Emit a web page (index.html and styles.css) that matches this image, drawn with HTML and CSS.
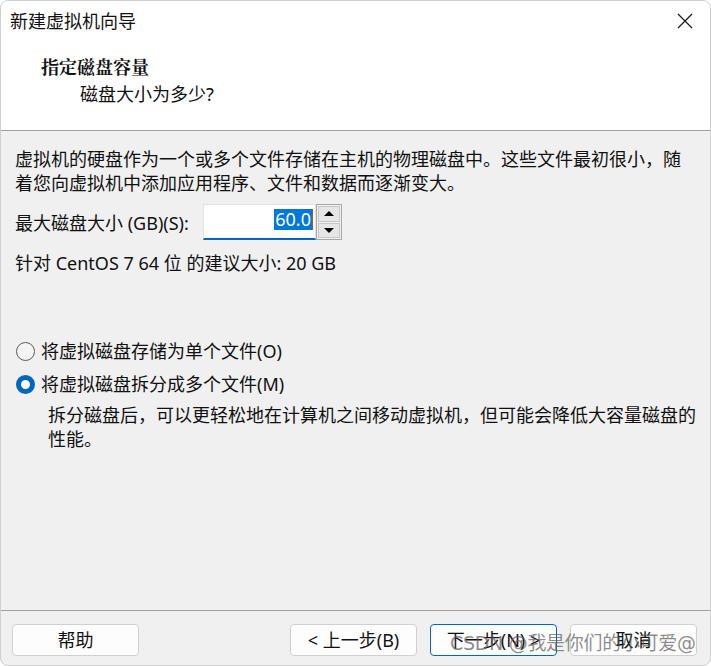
FILE: index.html
```html
<!DOCTYPE html>
<html lang="zh-CN">
<head>
<meta charset="utf-8">
<title>新建虚拟机向导</title>
<link rel="stylesheet" href="styles.css">
</head>
<body>
<div class="window">
  <div class="titlebar">
    <span class="title">新建虚拟机向导</span>
    <svg class="close" width="16" height="16" viewBox="0 0 16 16"><path d="M1 1L15 15M15 1L1 15" stroke="#1a1a1a" stroke-width="1.3" fill="none"/></svg>
  </div>
  <div class="header">
    <div class="h-title">指定磁盘容量</div>
    <div class="h-sub">磁盘大小为多少?</div>
  </div>
  <div class="content">
    <p class="intro">虚拟机的硬盘作为一个或多个文件存储在主机的物理磁盘中。这些文件最初很小，随<br>着您向虚拟机中添加应用程序、文件和数据而逐渐变大。</p>
    <div class="size-row">
      <span class="label">最大磁盘大小 (GB)(S):</span>
      <div class="field"><span class="sel">60.0</span><span class="caret"></span></div>
      <div class="spin">
        <div class="spin-btn"><span class="tri up"></span></div>
        <div class="spin-btn"><span class="tri down"></span></div>
      </div>
    </div>
    <p class="recommend">针对 CentOS 7 64 位 的建议大小: 20 GB</p>
    <div class="radio-row"><span class="radio"></span><span>将虚拟磁盘存储为单个文件(O)</span></div>
    <div class="radio-row second"><span class="radio checked"></span><span>将虚拟磁盘拆分成多个文件(M)</span></div>
    <p class="desc">拆分磁盘后，可以更轻松地在计算机之间移动虚拟机，但可能会降低大容量磁盘的<br>性能。</p>
  </div>
  <div class="footer">
    <button class="btn">帮助</button>
    <div class="spacer"></div>
    <button class="btn">&lt; 上一步(B)</button>
    <button class="btn default">下一步(N) &gt;</button>
    <button class="btn">取消</button>
  </div>
  <div class="watermark">CSDN @我是你们的小可爱@</div>
</div>
</body>
</html>
```
FILE: styles.css
```css
* { box-sizing: border-box; }
html, body { margin: 0; padding: 0; background: #ffffff; }
body {
  width: 711px;
  height: 666px;
  overflow: hidden;
  font-family: "Noto Sans", "Noto Sans CJK SC", sans-serif;
  font-size: 18px;
  color: #111;
}
.window {
  position: relative;
  width: 711px;
  height: 666px;
  display: flex;
  flex-direction: column;
  background: #f0f0f0;
  border: 1px solid #cfcfcf;
  border-radius: 8px;
  overflow: hidden;
}
.titlebar {
  height: 40px;
  background: #fff;
  display: flex;
  align-items: center;
  justify-content: space-between;
  padding: 0 17px 0 9px;
}
.title { font-size: 18px; line-height: 24px; }
.close { display: block; }
.header {
  background: #fff;
  height: 90px;
  padding-top: 13px;
  border-bottom: 1px solid #a0a0a0;
}
.h-title {
  font-weight: bold;
  line-height: 24px;
  padding-left: 40px;
  font-family: "Noto Serif CJK SC", "Noto Sans CJK SC", serif;
}
.h-sub {
  line-height: 24px;
  padding-left: 79px;
  margin-top: 4px;
}
.content {
  flex: 1;
  padding: 16px 0 0 14px;
}
.intro { margin: 0; line-height: 24px; }
.size-row {
  display: flex;
  align-items: center;
  margin-top: 9px;
  height: 36px;
}
.label { width: 188px; }
.field {
  width: 113px;
  height: 36px;
  background: #fff;
  border: 1px solid #e3e3e3;
  border-bottom: 2px solid #0067c0;
  display: flex;
  align-items: center;
  justify-content: flex-end;
  padding-right: 2px;
  padding-bottom: 4px;
}
.sel {
  background: #0078d7;
  color: #fff;
  line-height: 21px;
  padding: 0 1px;
}
.caret { width: 1px; height: 21px; background: #c05000; }
.spin {
  width: 26px;
  height: 36px;
  border: 1px solid #a8a8a8;
  display: flex;
  flex-direction: column;
  gap: 1px;
  padding: 1px;
  background: #f0f0f0;
}
.spin-btn {
  flex: 1;
  background: #e6e6e6;
  border: 1px solid #c8c8c8;
  display: flex;
  align-items: center;
  justify-content: center;
}
.tri { width: 0; height: 0; border-left: 5px solid transparent; border-right: 5px solid transparent; }
.tri.up { border-bottom: 5px solid #000; }
.tri.down { border-top: 5px solid #000; }
.recommend { margin: 11px 0 0; line-height: 24px; }
.radio-row {
  display: flex;
  align-items: center;
  gap: 6px;
  margin-top: 64px;
  line-height: 24px;
  padding-left: 1px;
}
.radio-row.second { margin-top: 9px; }
.radio {
  width: 19px;
  height: 19px;
  border-radius: 50%;
  border: 1px solid #5a5a5a;
  background: #f4f4f4;
  flex: none;
}
.radio.checked {
  border: 5.5px solid #0067c0;
  background: #fff;
}
.desc { margin: 7px 0 0 33px; line-height: 24px; }
.footer {
  height: 55px;
  border-top: 1px solid #a0a0a0;
  display: flex;
  align-items: flex-start;
  padding: 13px 13px 0 11px;
  gap: 13px;
}
.spacer { flex: 1; }
.btn {
  width: 127px;
  height: 32px;
  background: #fdfdfd;
  border: 1px solid #d0d0d0;
  border-radius: 4px;
  font-family: "Noto Sans", "Noto Sans CJK SC", sans-serif;
  font-size: 18px;
  color: #111;
  padding: 0;
  line-height: 28px;
}
.btn.default { border-color: #0067c0; }
.watermark {
  position: absolute;
  left: 449px;
  top: 628px;
  font-size: 19px;
  line-height: 28px;
  color: rgba(90, 90, 90, 0.7);
  font-family: "DejaVu Sans", "Noto Sans CJK SC", sans-serif;
  letter-spacing: -0.3px;
  white-space: nowrap;
}
```
